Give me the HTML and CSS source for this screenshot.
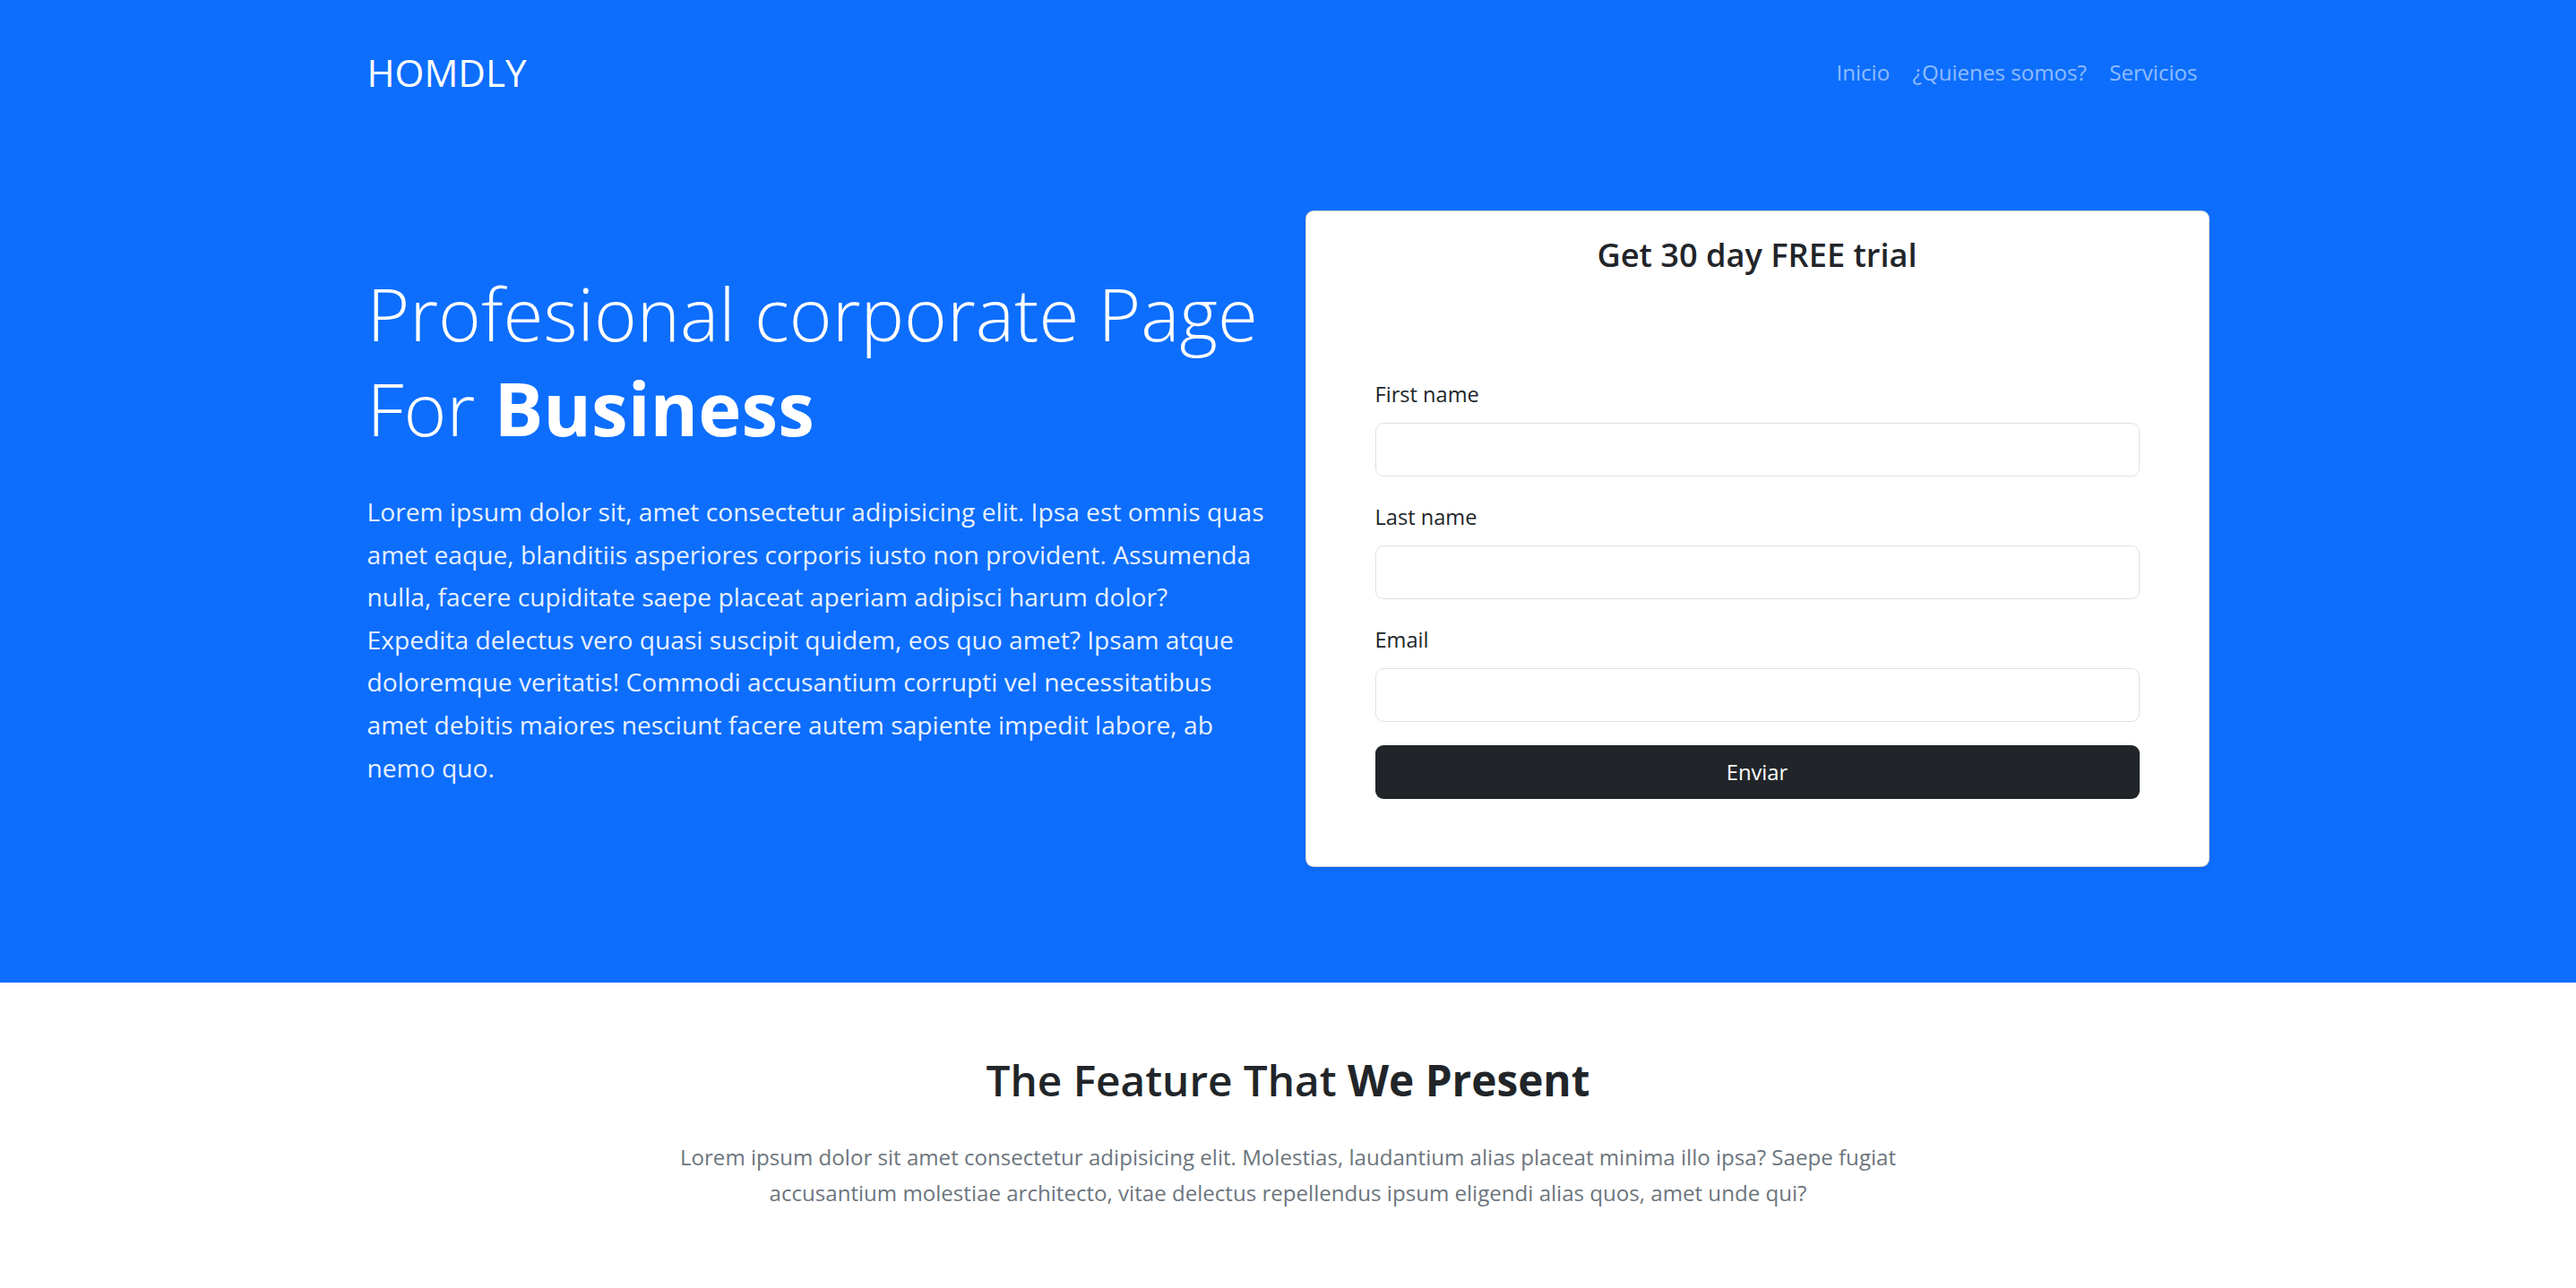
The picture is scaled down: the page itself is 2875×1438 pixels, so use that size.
FILE: index.html
```html
<!DOCTYPE html>
<html lang="es">
<head>
<meta charset="utf-8">
<title>HOMDLY</title>
<link rel="stylesheet" href="styles.css">
</head>
<body>
<section class="hero">
  <header class="container navbar">
    <a class="brand" href="#">HOMDLY</a>
    <nav class="nav-links">
      <a href="#">Inicio</a>
      <a href="#">¿Quienes somos?</a>
      <a href="#">Servicios</a>
    </nav>
  </header>
  <div class="container hero-row">
    <div class="hero-text">
      <h1 class="display">Profesional corporate Page<br>For <strong>Business</strong></h1>
      <p class="lead">Lorem ipsum dolor sit, amet consectetur adipisicing elit. Ipsa est omnis quas<br>amet eaque, blanditiis asperiores corporis iusto non provident. Assumenda<br>nulla, facere cupiditate saepe placeat aperiam adipisci harum dolor?<br>Expedita delectus vero quasi suscipit quidem, eos quo amet? Ipsam atque<br>doloremque veritatis! Commodi accusantium corrupti vel necessitatibus<br>amet debitis maiores nesciunt facere autem sapiente impedit labore, ab<br>nemo quo.</p>
    </div>
    <div class="card">
      <h4 class="card-title">Get 30 day FREE trial</h4>
      <form class="trial-form">
        <div class="field">
          <label for="fn">First name</label>
          <input id="fn" type="text">
        </div>
        <div class="field">
          <label for="ln">Last name</label>
          <input id="ln" type="text">
        </div>
        <div class="field">
          <label for="em">Email</label>
          <input id="em" type="email">
        </div>
        <button type="button" class="btn-dark">Enviar</button>
      </form>
    </div>
  </div>
</section>
<section class="features">
  <h2 class="features-title">The Feature That <strong>We Present</strong></h2>
  <p class="features-text">Lorem ipsum dolor sit amet consectetur adipisicing elit. Molestias, laudantium alias placeat minima illo ipsa? Saepe fugiat<br>accusantium molestiae architecto, vitae delectus repellendus ipsum eligendi alias quos, amet unde qui?</p>
</section>
</body>
</html>
```
FILE: styles.css
```css
* { box-sizing: border-box; }
html, body { margin: 0; padding: 0; }
body {
  font-family: "Open Sans", "Noto Sans", "Liberation Sans", sans-serif;
  color: #212529;
  background: #fff;
}
.container {
  width: 2056px;
  margin: 0 auto;
}
.hero {
  background: #0d6efd;
  color: #fff;
  padding-bottom: 129px;
}
.navbar {
  height: 161px;
  display: flex;
  align-items: center;
  justify-content: space-between;
}
.brand {
  color: #fff;
  text-decoration: none;
  font-size: 42.2px;
  line-height: 72px;
}
.nav-links {
  display: flex;
}
.nav-links a {
  color: rgba(255, 255, 255, 0.55);
  text-decoration: none;
  font-size: 24.1px;
  line-height: 38px;
  padding: 0 12.7px;
}
.nav-links a:last-child { padding-right: 13px; }
.hero-row {
  padding-top: 74px;
  display: grid;
  grid-template-columns: 1fr 1fr;
  column-gap: 38px;
  align-items: center;
}
.display {
  margin: 0 0 38px;
  font-size: 81.7px;
  font-weight: 300;
  line-height: 106.6px;
}
.display strong { font-weight: 700; }
.lead {
  margin: 0 0 25px;
  font-size: 28.2px;
  line-height: 47.6px;
  color: rgba(255, 255, 255, 0.92);
}
.card {
  background: #fff;
  color: #212529;
  border: 1px solid rgba(0, 0, 0, 0.175);
  border-radius: 9px;
  box-shadow: 0 3px 6px rgba(0, 0, 0, 0.075);
  padding: 25px 77px 76px;
  height: 733px;
}
.card-title {
  margin: 0 0 114px;
  text-align: center;
  font-size: 36.2px;
  font-weight: 600;
  line-height: 46px;
}
.field {
  margin-bottom: 26px;
}
.field label {
  display: block;
  font-size: 23.6px;
  line-height: 38px;
  margin-bottom: 13px;
}
.field input {
  display: block;
  width: 100%;
  height: 60px;
  border: 1px solid #dee2e6;
  border-radius: 9px;
  background: #fff;
  font: inherit;
}
.btn-dark {
  display: block;
  width: 100%;
  height: 60px;
  border: none;
  border-radius: 9px;
  background: #212529;
  color: #fff;
  font-family: inherit;
  font-size: 23.8px;
}
.features {
  padding-top: 78px;
  text-align: center;
}
.features-title {
  margin: 0 0 36px;
  font-size: 47.7px;
  font-weight: 600;
  line-height: 61px;
}
.features-title strong { font-weight: 700; }
.features-text {
  margin: 0;
  color: #6c757d;
  font-size: 24.1px;
  line-height: 40px;
}
```
